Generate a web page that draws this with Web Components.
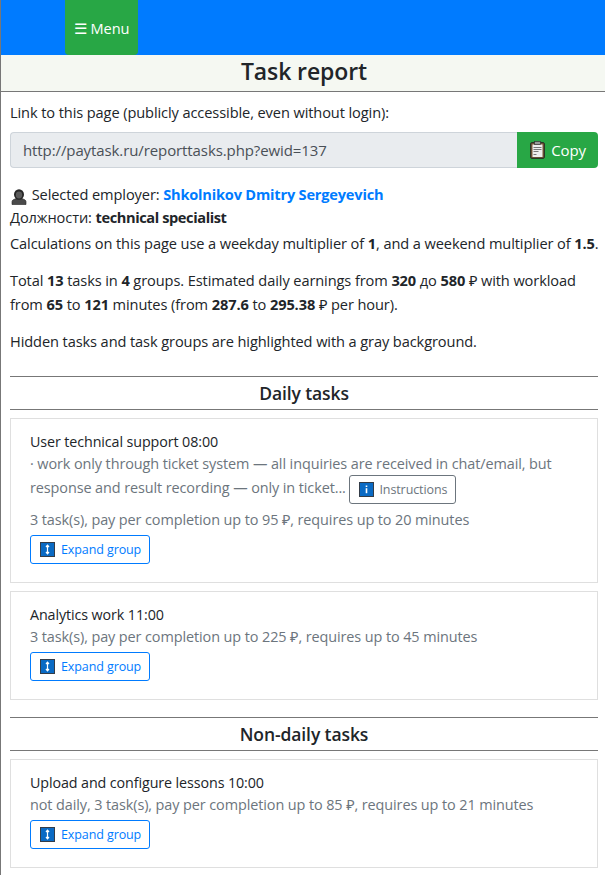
<!DOCTYPE html>
<html>
<head>
<meta charset="utf-8">
<title>Task report</title>
<style>
html, body { margin: 0; padding: 0; background: #fff; }
body { font-family: "Open Sans", "Noto Sans", sans-serif; font-size: 14.6px; letter-spacing: -0.1px; line-height: 24px; color: #212529; overflow: hidden; height: 875px; border-left: 1px solid #777; box-sizing: border-box; }
</style>
</head>
<body>
<top-bar></top-bar>
<page-title>Task report</page-title>
<main-content></main-content>
<script>
// small icons shared by the components
var ICONS = {
	info: '<svg width="15" height="15" viewBox="0 0 15 15"><rect x="0.5" y="0.5" width="14" height="14" fill="#0a6ac4" stroke="#333c48"/><rect x="6.7" y="6.2" width="1.6" height="5" fill="#fff"/><rect x="6.7" y="3.5" width="1.6" height="1.5" fill="#fff"/></svg>',
	expand: '<svg width="15" height="15" viewBox="0 0 15 15"><rect x="0.5" y="0.5" width="14" height="14" fill="#0a6ac4" stroke="#333c48"/><path d="M7.5 3.5v8M6 5l1.5-1.8L9 5M6 10l1.5 1.8L9 10" stroke="#fff" stroke-width="1.2" fill="none"/></svg>',
	clipboard: '<svg width="15" height="18" viewBox="0 0 15 18"><rect x="0.7" y="1.7" width="13.6" height="15.6" rx="1" fill="#7a5a3a" stroke="#222"/><rect x="2.5" y="3.5" width="10" height="12.5" fill="#eee"/><rect x="4.5" y="0.5" width="6" height="3" fill="#999" stroke="#333" stroke-width="0.7"/><path d="M3.5 6.5h8M3.5 8.5h8M3.5 10.5h5M3.5 13.5h3" stroke="#777" fill="none"/></svg>',
	person: '<svg width="16" height="16" viewBox="0 0 16 16"><path d="M1 15.5v-3c0-1.3 2-2.2 3.5-2.7h7c1.5 .5 3.5 1.4 3.5 2.7v3z" fill="#4a4a4a" stroke="#222" stroke-width="0.6"/><ellipse cx="8" cy="5.5" rx="5" ry="5.2" fill="#262626"/><ellipse cx="8" cy="6" rx="3.2" ry="3.4" fill="#5a5a5a"/></svg>'
};

function define(name, css, html){
	customElements.define(name, class extends HTMLElement{
		constructor(){
			super();
			this.attachShadow({mode:'open'}).innerHTML = '<style>'+css+'</style>'+html;
		}
	});
}

define('top-bar', `
	:host{ display:flex; height:55px; background:#007bff; padding-left:64px; }
	.menu{ display:flex; align-items:center; padding:0 9px; background:#28a745; color:#fff; border-radius:0 0 4px 4px; font-size:14.6px; }
`, `<div class="menu">☰ Menu</div>`);

define('page-title', `
	:host{ display:block; height:36px; padding-left:2px; background:#f5f8f2; border-bottom:1px solid #777; text-align:center; font-size:23px; line-height:33px; font-weight:600; }
`, `<slot></slot>`);

define('link-box', `
	:host{ display:flex; height:36px; margin:8px 7px 0 9px; font-size:15px; }
	.url{ flex:1; background:#e9ecef; border:1px solid #ced4da; border-right:0; border-radius:4px 0 0 4px; padding:0 12px; line-height:34px; color:#495057; }
	.copy{ display:flex; align-items:center; gap:6px; padding:0 12px 0 13px; background:#28a745; color:#fff; border-radius:0 4px 4px 0; }
`, `<div class="url"><slot></slot></div><div class="copy">${ICONS.clipboard}Copy</div>`);

define('section-head', `
	:host{ display:block; box-sizing:border-box; border-top:1px solid #777; border-bottom:1px solid #777; margin:0 7px 0 9px; height:34px; text-align:center; font-size:17.5px; line-height:33px; font-weight:600; }
`, `<slot></slot>`);

define('task-card', `
	:host{ display:block; border:1px solid #dfdfdf; margin:8px 7px 8px 9px; padding:12px 19px 18px; color:#6c757d; font-size:14.45px; line-height:22px; }
	.title{ color:#212529; font-size:14.3px; }
	.row{ display:flex; }
	.btn{ display:inline-flex; box-sizing:border-box; align-items:center; gap:6px; height:29px; padding:0 8px 0 9px; border:1px solid #007bff; color:#007bff; border-radius:3px; font-size:12.5px; margin-top:4px; }
`, `<div class="title"><slot name="title"></slot></div><slot></slot><div class="row"><span class="btn">${ICONS.expand}Expand group</span></div>`);

define('info-button', `
	:host{ display:inline-flex; box-sizing:border-box; align-items:center; gap:5px; height:29px; padding:0 8px 0 9px; border:1px solid #6c757d; color:#6c757d; border-radius:3px; font-size:12.5px; vertical-align:middle; }
`, `${ICONS.info}<slot></slot>`);

define('main-content', `
	:host{ display:block; }
	a{ color:#007bff; font-weight:700; text-decoration:none; letter-spacing:-0.2px; }
	p{ margin:0 7px 0 9px; }
	.link{ padding-top:8px; }
	.person svg{ vertical-align:1px; margin:-6px 1px -6px 1px; }
	.tight{ letter-spacing:-0.4px; }
	.nowrap{ white-space:nowrap; }
	.sect{ margin-top:23px; }
	.sect2{ margin-top:17px; }
	.meta{ display:block; margin-top:5px; }
`, `
	<p class="link">Link to this page (publicly accessible, even without login):</p>
	<link-box>http://paytask.ru/reporttasks.php?ewid=137</link-box>
	<p style="margin-top:14px"><span class="person">${ICONS.person}</span> Selected employer: <a>Shkolnikov Dmitry Sergeyevich</a></p>
	<p style="margin-top:-1px">Должности: <b class="tight">technical specialist</b></p>
	<p class="nowrap" style="margin-top:2px">Calculations on this page use a weekday multiplier of <b>1</b>, and a weekend multiplier of <b>1.5</b>.</p>
	<p style="margin-top:13px">Total <b>13</b> tasks in <b>4</b> groups. Estimated daily earnings from <b>320</b> до <b>580</b> ₽ with workload from <b>65</b> to <b>121</b> minutes (from <b>287.6</b> to <b>295.38</b> ₽ per hour).</p>
	<p style="margin-top:13px">Hidden tasks and task groups are highlighted with a gray background.</p>
	<section-head class="sect">Daily tasks</section-head>
	<task-card>
		<span slot="title">User technical support 08:00</span>
		<div>· work only through ticket system — all inquiries are received in chat/email, but response and result recording — only in ticket... <info-button>Instructions</info-button></div>
		<span class="meta">3 task(s), pay per completion up to 95 ₽, requires up to 20 minutes</span>
	</task-card>
	<task-card>
		<span slot="title">Analytics work 11:00</span>
		3 task(s), pay per completion up to 225 ₽, requires up to 45 minutes
	</task-card>
	<section-head class="sect2">Non-daily tasks</section-head>
	<task-card>
		<span slot="title">Upload and configure lessons 10:00</span>
		not daily, 3 task(s), pay per completion up to 85 ₽, requires up to 21 minutes
	</task-card>
`);
</script>
</body>
</html>
